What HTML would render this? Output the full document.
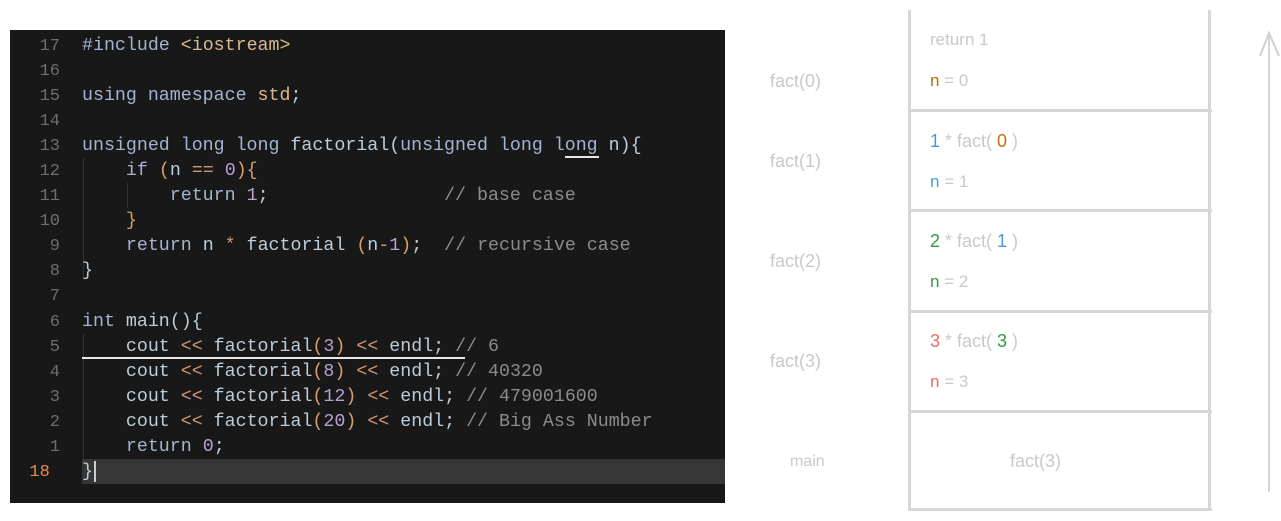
<!DOCTYPE html>
<html><head><meta charset="utf-8"><style>
body{margin:0;width:1281px;height:521px;background:#fff;position:relative;overflow:hidden;font-family:"Liberation Sans",sans-serif}
#ed{position:absolute;left:10px;top:30px;width:715px;height:473px;background:#181818}
#hl{position:absolute;left:82px;top:459px;width:643px;height:25px;background:#363636}
.ln{position:absolute;left:10px;width:50px;text-align:right;font:17px/25.1px "Liberation Mono",monospace;color:#6e6e6e;top:33.5px;white-space:pre}
pre{position:absolute;left:82px;top:33.5px;margin:0;font:18.3px/25.1px "Liberation Mono",monospace;color:#bccdd9}
.k{color:#a3b3d0}.o{color:#d29676}.n{color:#b7a0d4}.p{color:#d9a06c}.c{color:#8b8b8b}.s{color:#d9b98f}
.g{position:absolute;left:83px;width:1px;background:#333}
.t{position:absolute;color:#c9c9c9;font-size:18px;font-family:"Liberation Sans",sans-serif}
.hl2{position:absolute;background:#d6d6d6}
</style></head><body>
<div id="ed"></div><div id="hl"></div>
<div class="g" style="top:158px;height:120px"></div>
<div class="g" style="top:334px;height:125px"></div>
<div class="g" style="left:127px;top:183px;height:25px"></div>
<div class="ln">17
16
15
14
13
12
11
10
9
8
7
6
5
4
3
2
1
<span style="color:#f08a4b">18 </span></div>
<pre><span class="k">#include</span> <span class="s">&lt;iostream&gt;</span>

<span class="k">using namespace</span> <span class="s">std</span>;

<span class="k">unsigned long long</span> factorial(<span class="k">unsigned long long</span> n){
    <span class="k">if</span> <span class="p">(</span>n <span class="o">==</span> <span class="n">0</span><span class="p">){</span>
        <span class="k">return</span> <span class="n">1</span>;                <span class="c">// base case</span>
    <span class="p">}</span>
    <span class="k">return</span> n <span class="o">*</span> factorial <span class="p">(</span>n<span class="o">-</span><span class="n">1</span><span class="p">)</span>;  <span class="c">// recursive case</span>
}

<span class="k">int</span> main(){
    cout <span class="o">&lt;&lt;</span> factorial<span class="p">(</span><span class="n">3</span><span class="p">)</span> <span class="o">&lt;&lt;</span> endl; <span class="c">// 6</span>
    cout <span class="o">&lt;&lt;</span> factorial<span class="p">(</span><span class="n">8</span><span class="p">)</span> <span class="o">&lt;&lt;</span> endl; <span class="c">// 40320</span>
    cout <span class="o">&lt;&lt;</span> factorial<span class="p">(</span><span class="n">12</span><span class="p">)</span> <span class="o">&lt;&lt;</span> endl; <span class="c">// 479001600</span>
    cout <span class="o">&lt;&lt;</span> factorial<span class="p">(</span><span class="n">20</span><span class="p">)</span> <span class="o">&lt;&lt;</span> endl; <span class="c">// Big Ass Number</span>
    <span class="k">return</span> <span class="n">0</span>;
}</pre>
<div style="position:absolute;left:82px;top:357px;width:383px;height:2px;background:#e8e8e8"></div>
<div style="position:absolute;left:565px;top:156px;width:34px;height:2px;background:#e8e8e8"></div>
<div style="position:absolute;left:94px;top:461px;width:2px;height:21px;background:#ccc"></div>

<div class="hl2" style="left:908px;top:10px;width:3px;height:500px"></div>
<div class="hl2" style="left:1208px;top:10px;width:3px;height:500px"></div>
<div class="hl2" style="left:908px;top:109px;width:304px;height:3px"></div>
<div class="hl2" style="left:908px;top:209px;width:304px;height:3px"></div>
<div class="hl2" style="left:908px;top:310px;width:304px;height:3px"></div>
<div class="hl2" style="left:908px;top:410px;width:304px;height:3px"></div>
<div class="hl2" style="left:908px;top:508px;width:304px;height:3px"></div>
<div class="hl2" style="left:1268px;top:32px;width:2px;height:460px"></div>
<svg style="position:absolute;left:1258px;top:30px" width="24" height="30"><path d="M2 26 L11 3 L21 26" fill="none" stroke="#d0d0d0" stroke-width="2"/></svg>

<div class="t" style="left:770px;top:71px">fact(0)</div>
<div class="t" style="left:770px;top:151px">fact(1)</div>
<div class="t" style="left:770px;top:251px">fact(2)</div>
<div class="t" style="left:770px;top:351px">fact(3)</div>
<div class="t" style="left:790px;top:453px;font-size:16px">main</div>
<div class="t" style="left:1010px;top:451px">fact(3)</div>

<div class="t" style="left:930px;top:30px;font-size:17px">return 1</div>
<div class="t" style="left:930px;top:71px;font-size:17px"><span style="color:#b86a10">n</span> = 0</div>
<div class="t" style="left:930px;top:131px;font-size:18px"><span style="color:#4a9ae0">1</span> * fact( <span style="color:#c07010">0</span> )</div>
<div class="t" style="left:930px;top:172px;font-size:17px"><span style="color:#4a9ae0">n</span> = 1</div>
<div class="t" style="left:930px;top:231px;font-size:18px"><span style="color:#2e9a3e">2</span> * fact( <span style="color:#4a9ae0">1</span> )</div>
<div class="t" style="left:930px;top:272px;font-size:17px"><span style="color:#2e9a3e">n</span> = 2</div>
<div class="t" style="left:930px;top:331px;font-size:18px"><span style="color:#f06868">3</span> * fact( <span style="color:#2e9a3e">3</span> )</div>
<div class="t" style="left:930px;top:372px;font-size:17px"><span style="color:#f06868">n</span> = 3</div>
</body></html>
